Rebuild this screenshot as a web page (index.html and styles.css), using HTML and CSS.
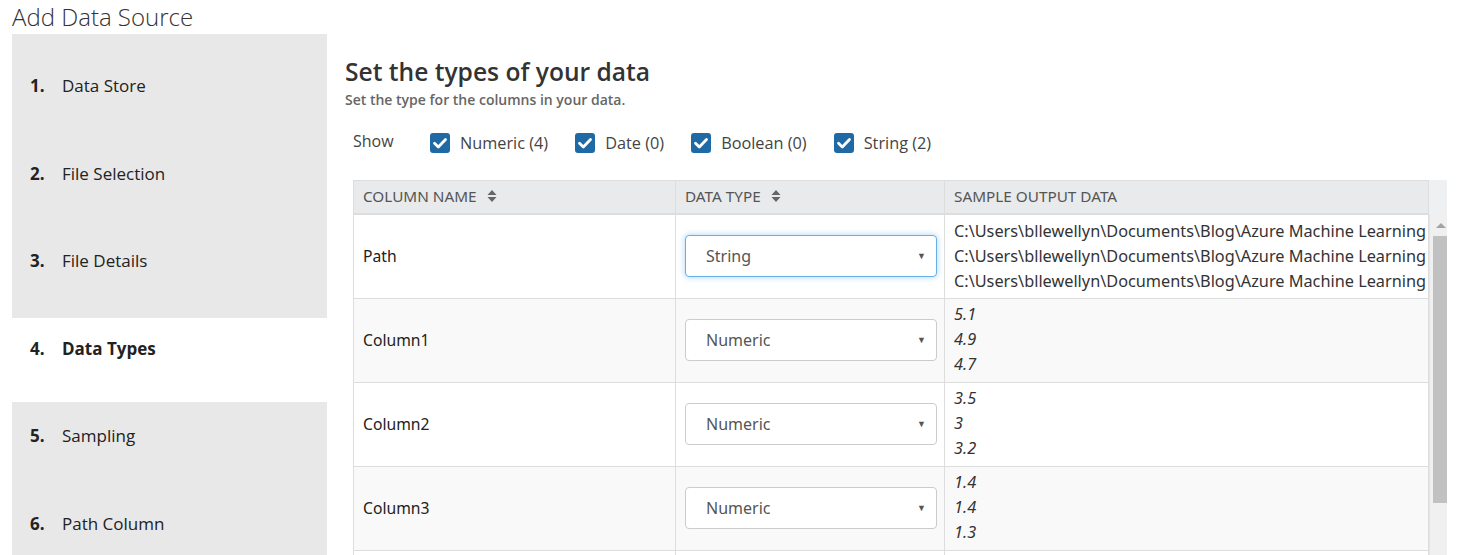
FILE: index.html
```html
<!DOCTYPE html>
<html lang="en">
<head>
<meta charset="utf-8">
<title>Add Data Source</title>
<link rel="stylesheet" href="styles.css">
</head>
<body>
<h1 class="page-title">Add Data Source</h1>
<div class="wizard">
  <nav class="steps">
    <div class="step"><span class="num">1.</span><span class="label">Data Store</span></div>
    <div class="step"><span class="num">2.</span><span class="label">File Selection</span></div>
    <div class="step"><span class="num">3.</span><span class="label">File Details</span></div>
    <div class="step active"><span class="num">4.</span><span class="label">Data Types</span></div>
    <div class="step"><span class="num">5.</span><span class="label">Sampling</span></div>
    <div class="step"><span class="num">6.</span><span class="label">Path Column</span></div>
  </nav>
  <main class="content">
    <h2 class="section-title">Set the types of your data</h2>
    <p class="section-sub">Set the type for the columns in your data.</p>
    <div class="filters">
      <span class="show">Show</span>
      <label class="check"><span class="box"><svg viewBox="0 0 20 20" width="20" height="20"><path d="M4.5 10.2 L8.3 14 L15.5 6.5" fill="none" stroke="#fff" stroke-width="2.8" stroke-linecap="round" stroke-linejoin="round"/></svg></span>Numeric (4)</label>
      <label class="check"><span class="box"><svg viewBox="0 0 20 20" width="20" height="20"><path d="M4.5 10.2 L8.3 14 L15.5 6.5" fill="none" stroke="#fff" stroke-width="2.8" stroke-linecap="round" stroke-linejoin="round"/></svg></span>Date (0)</label>
      <label class="check"><span class="box"><svg viewBox="0 0 20 20" width="20" height="20"><path d="M4.5 10.2 L8.3 14 L15.5 6.5" fill="none" stroke="#fff" stroke-width="2.8" stroke-linecap="round" stroke-linejoin="round"/></svg></span>Boolean (0)</label>
      <label class="check"><span class="box"><svg viewBox="0 0 20 20" width="20" height="20"><path d="M4.5 10.2 L8.3 14 L15.5 6.5" fill="none" stroke="#fff" stroke-width="2.8" stroke-linecap="round" stroke-linejoin="round"/></svg></span>String (2)</label>
    </div>
    <div class="grid">
      <div class="grid-head">
        <div class="hcell c1">COLUMN NAME <svg class="sort" viewBox="0 0 10 14" width="10" height="14"><path d="M5 1 L9.5 6 L0.5 6 Z M5 13 L9.5 8 L0.5 8 Z" fill="#666"/></svg></div>
        <div class="hcell c2">DATA TYPE <svg class="sort" viewBox="0 0 10 14" width="10" height="14"><path d="M5 1 L9.5 6 L0.5 6 Z M5 13 L9.5 8 L0.5 8 Z" fill="#666"/></svg></div>
        <div class="hcell c3">SAMPLE OUTPUT DATA</div>
        <div class="hfill"></div>
      </div>
      <div class="grid-body">
        <div class="rows">
          <div class="row">
            <div class="cell c1">Path</div>
            <div class="cell c2"><div class="select focused"><span>String</span><span class="arrow">▼</span></div></div>
            <div class="cell c3 sample"><div>C:\Users\bllewellyn\Documents\Blog\Azure Machine Learning</div><div>C:\Users\bllewellyn\Documents\Blog\Azure Machine Learning</div><div>C:\Users\bllewellyn\Documents\Blog\Azure Machine Learning</div></div>
          </div>
          <div class="row alt">
            <div class="cell c1">Column1</div>
            <div class="cell c2"><div class="select"><span>Numeric</span><span class="arrow">▼</span></div></div>
            <div class="cell c3 sample num"><div>5.1</div><div>4.9</div><div>4.7</div></div>
          </div>
          <div class="row">
            <div class="cell c1">Column2</div>
            <div class="cell c2"><div class="select"><span>Numeric</span><span class="arrow">▼</span></div></div>
            <div class="cell c3 sample num"><div>3.5</div><div>3</div><div>3.2</div></div>
          </div>
          <div class="row alt">
            <div class="cell c1">Column3</div>
            <div class="cell c2"><div class="select"><span>Numeric</span><span class="arrow">▼</span></div></div>
            <div class="cell c3 sample num"><div>1.4</div><div>1.4</div><div>1.3</div></div>
          </div>
          <div class="row">
            <div class="cell c1"></div>
            <div class="cell c2"></div>
            <div class="cell c3"></div>
          </div>
        </div>
        <div class="scrollbar">
          <div class="sb-up"></div>
          <div class="sb-thumb"></div>
        </div>
      </div>
    </div>
  </main>
</div>
</body>
</html>
```

FILE: styles.css
```css
html, body {
  margin: 0;
  padding: 0;
  background: #fff;
  overflow: hidden;
  height: 555px;
}
body {
  padding: 0 12px;
  font-family: "Open Sans", "Noto Sans", sans-serif;
  color: #222;
}
.page-title {
  margin: 0;
  height: 34px;
  font-size: 24px;
  font-weight: 300;
  line-height: 34px;
  color: #333;
}
.wizard {
  display: flex;
  align-items: flex-start;
  height: 521px;
  overflow: hidden;
}
.steps {
  width: 315px;
  flex: 0 0 315px;
  background: #e8e8e8;
  padding-top: 21px;
  height: 521px;
  box-sizing: border-box;
}
.step {
  height: 87.5px;
  box-sizing: border-box;
  padding: 20px 0 0 18px;
  font-size: 17px;
  line-height: 22px;
  color: #222;
  display: flex;
}
.step .num {
  font-weight: 700;
  width: 32px;
}
.step.active {
  background: #fff;
  height: 84px;
  margin-bottom: 3.5px;
}
.step.active .label {
  font-weight: 700;
}
.content {
  flex: 1;
  padding-left: 18px;
}
.section-title {
  margin: 23px 0 0;
  font-size: 24.6px;
  font-weight: 600;
  line-height: 30px;
  color: #333;
}
.section-sub {
  margin: 4px 0 0;
  font-size: 14px;
  font-weight: 600;
  line-height: 18px;
  color: #666;
}
.filters {
  display: flex;
  align-items: center;
  margin: 19px 0 0 8px;
  height: 30px;
  font-size: 16px;
  color: #444;
}
.show {
  width: 77px;
  position: relative;
  top: -2px;
}
.check {
  display: flex;
  align-items: center;
  margin-right: 27px;
  font-size: 16.3px;
  color: #444;
}
.box {
  width: 20px;
  height: 20px;
  border-radius: 3px;
  background: #1f6aa5;
  margin-right: 10px;
  display: flex;
}
.grid {
  margin: 22px 0 0 8px;
  width: 1099px;
  font-family: "Noto Sans", sans-serif;
}
.grid-head {
  display: flex;
  height: 35px;
}
.hcell {
  box-sizing: border-box;
  background: #e9eaec;
  border-top: 1px solid #ddd;
  border-left: 1px solid #ddd;
  border-bottom: 2px solid #ddd;
  padding-left: 9px;
  padding-bottom: 2px;
  font-size: 15.3px;
  line-height: 30px;
  color: #555;
  display: flex;
  align-items: center;
  white-space: nowrap;
}
.hcell.c3 {
  border-right: 1px solid #ddd;
}
.sort {
  margin-left: 10px;
}
.c1 { width: 322px; flex: 0 0 322px; }
.c2 { width: 269px; flex: 0 0 269px; }
.c3 { width: 485px; flex: 0 0 485px; }
.hfill {
  flex: 1;
  background: #eff0f2;
}
.grid-body {
  display: flex;
  height: 400px;
}
.rows {
  width: 1076px;
  flex: 0 0 1076px;
}
.row {
  display: flex;
  height: 84px;
  border-bottom: 1px solid #ddd;
  box-sizing: border-box;
  background: #fff;
}
.row.alt {
  background: #f9f9f9;
}
.cell {
  box-sizing: border-box;
  border-left: 1px solid #ddd;
  padding: 0 0 2px 9px;
  display: flex;
  align-items: center;
  font-size: 15.7px;
  color: #222;
  overflow: hidden;
}
.cell.c3 {
  border-right: 1px solid #ddd;
}
.sample {
  flex-direction: column;
  align-items: flex-start;
  justify-content: center;
  white-space: nowrap;
  line-height: 25px;
  font-size: 16.3px;
  color: #333;
  padding-bottom: 0;
}
.sample.num {
  font-style: italic;
  justify-content: flex-start;
  padding-top: 3px;
}
.select {
  box-sizing: border-box;
  width: 252px;
  height: 42px;
  border: 1px solid #ccc;
  border-radius: 4px;
  background: #fff;
  display: flex;
  align-items: center;
  justify-content: space-between;
  padding: 0 10px 0 20px;
  font-size: 16px;
  color: #555;
}
.select.focused {
  border-color: #66afe9;
  box-shadow: 0 0 6px rgba(102, 175, 233, 0.55);
}
.arrow {
  font-size: 9px;
  color: #555;
}
.scrollbar {
  flex: 1;
  background: #f0f0f0;
  border-left: 1px solid #e4e4e4;
}
.sb-up {
  width: 0;
  height: 0;
  margin: 8px auto 0;
  border-left: 5px solid transparent;
  border-right: 5px solid transparent;
  border-bottom: 5px solid #a3a3a3;
}
.sb-thumb {
  margin: 8px 2px 0 3px;
  height: 267px;
  background: #c1c1c1;
}
```
